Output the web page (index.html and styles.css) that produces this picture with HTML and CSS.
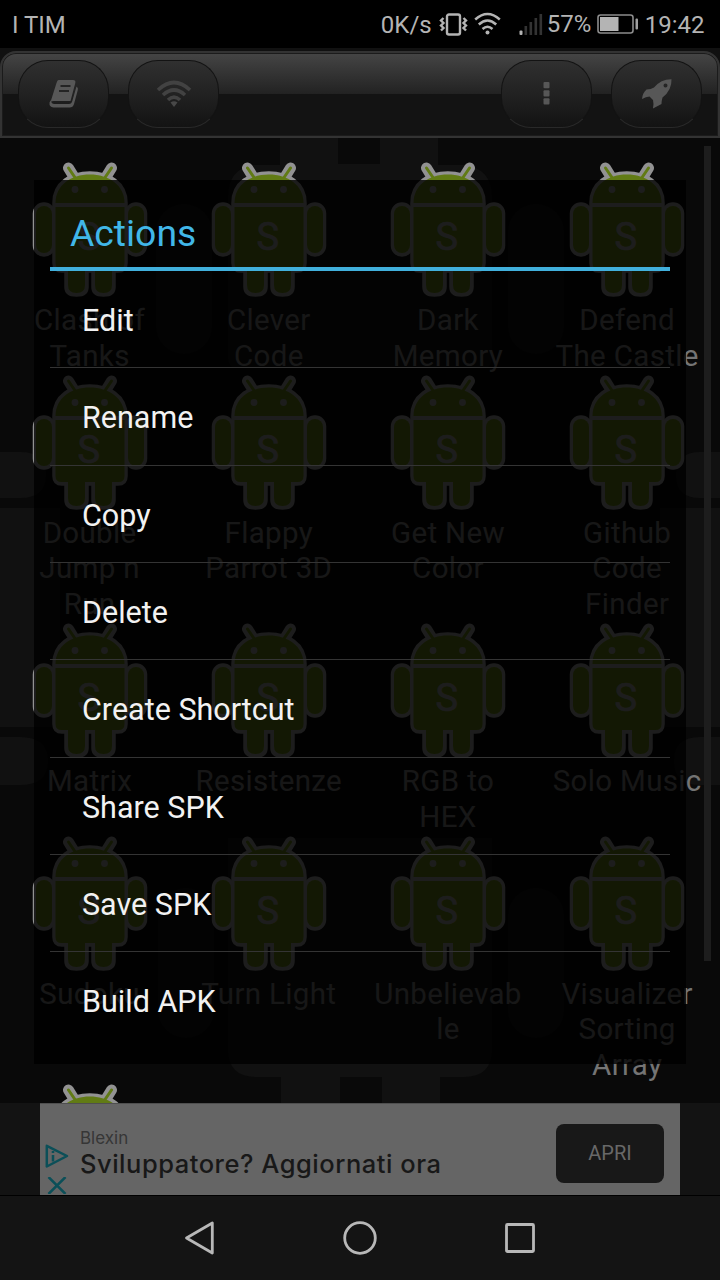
FILE: index.html
```
<!DOCTYPE html>
<html lang="it">
<head>
<meta charset="utf-8">
<title>Actions</title>
<link rel="stylesheet" href="styles.css">
</head>
<body>
<svg class="defs" width="0" height="0">
  <symbol id="droid" viewBox="0 0 116 136">
    <g class="droid-outline">
      <path d="M36.5 6 42 15M79.5 6 74 15" stroke-width="11"/>
      <g stroke-width="7.500">
        <path class="droid-base" d="M24 41C24 22 40 13 57.800 13S92 22 92 41V101Q92 107 86 107H80V125Q80 131 71.500 131T63 125V107H53V125Q53 131 44.500 131T36 125V107H30Q24 107 24 101Z"/>
        <rect x="4.500" y="44" width="15" height="47" rx="7.500"/>
        <rect x="96.500" y="44" width="15" height="47" rx="7.500"/>
      </g>
    </g>
    <g class="droid-fill">
      <path class="droid-antenna" d="M36.500 6 44 17M79.500 6 72 17"/>
      <path d="M23.500 41C23.500 23 39 12.500 57.800 12.500S92.500 23 92.500 41Z"/>
      <path d="M23.500 45H92.500V101Q92.500 107 86.500 107H80V123Q80 131 71.500 131T63 123V107H53V123Q53 131 44.500 131T36 123V107H29.500Q23.500 107 23.500 101Z"/>
      <rect x="4" y="44" width="16" height="47" rx="8"/>
      <rect x="96" y="44" width="16" height="47" rx="8"/>
    </g>
    <circle class="droid-mark" cx="43" cy="27.500" r="3.400"/>
    <circle class="droid-mark" cx="72.500" cy="27.500" r="3.400"/>
    <text class="droid-mark droid-letter" x="57" y="87.500" text-anchor="middle">S</text>
  </symbol>
</svg>

<div class="screen">
  <header class="status">
    <span class="carrier">I TIM</span>
    <div class="status-right">
      <span class="rate">0K/s</span>
      <svg class="vibrate" width="29" height="24" viewBox="0 0 29 24" fill="none" stroke="#b4b4b4">
        <rect x="8" y="2.500" width="13" height="20" rx="2" stroke-width="2.400"/>
        <path d="M4.500 6 2 8.500 4.500 11 2 13.500 4.500 16 2 18.500M24.500 6 27 8.500 24.500 11 27 13.500 24.500 16 27 18.500" stroke-width="2.400"/>
      </svg>
      <svg class="wifi" width="27" height="24" viewBox="0 0 27 24" fill="none" stroke="#b4b4b4" stroke-width="2.500">
        <path d="M1.200 7.500Q13.500-3.500 25.800 7.500M4.800 12.500Q13.500 4.500 22.200 12.500M8.500 17Q13.500 12.500 18.500 17"/>
        <circle cx="13.500" cy="20.500" r="2" fill="#b4b4b4" stroke="none"/>
      </svg>
      <svg class="signal" width="24" height="24" viewBox="0 0 24 24" fill="#333">
        <rect x=".5" y="18.500" width="3" height="4.500" rx="1" fill="#b4b4b4"/>
        <rect x="5.500" y="14" width="2.600" height="9"/><rect x="10.500" y="10" width="2.600" height="13"/>
        <rect x="15.500" y="6" width="2.600" height="17"/><rect x="20.500" y="2" width="2.600" height="21"/>
      </svg>
      <span class="percent">57%</span>
      <svg class="battery" width="42" height="22" viewBox="0 0 42 22">
        <rect x="1" y="1" width="35" height="18" rx="2.500" fill="none" stroke="#8c8c8c" stroke-width="1.600"/>
        <rect x="3" y="3" width="18.500" height="14" fill="#b4b4b4"/>
        <rect x="38.500" y="4.500" width="2.500" height="11" rx="1" fill="#a0a0a0"/>
      </svg>
      <span class="clock">19:42</span>
    </div>
  </header>

  <nav class="toolbar">
    <div class="toolbar-inner">
      <button class="tool">
        <svg width="30" height="30" viewBox="0 0 30 30">
          <path d="M9.500 1H24Q27 1 26.300 4L21.500 22H5Q2.500 22 1.500 23L7.500 4Q8.300 1 9.500 1Z" fill="#575757"/>
          <path d="M27.500 7.500Q29.500 8.500 28.800 11L25 25Q24 28.500 20.500 28.500H4.500Q0 28 .5 23.500L2 21Q2 25 5.500 25H20Q22.500 25 23.300 22Z" fill="#575757"/>
          <path d="M11.500 7H21.500M10 12H20" stroke="#242424" stroke-width="2"/>
        </svg>
      </button>
      <button class="tool">
        <svg width="36" height="28" viewBox="0 0 36 28" fill="none" stroke="#424242" stroke-width="3.600">
          <path d="M2 10Q18-5 34 10M7 15Q18 5 29 15M12 20Q18 14 24 20"/>
          <path d="M14.500 22.500Q18 20 21.500 22.500L18 27Z" fill="#484848" stroke="none"/>
        </svg>
      </button>
      <span class="spacer"></span>
      <button class="tool">
        <svg width="8" height="26" viewBox="0 0 8 26" fill="#575757"><rect x=".5" y="1" width="6" height="6.200" rx="1"/><rect x=".5" y="9.200" width="6" height="6.200" rx="1"/><rect x=".5" y="17.300" width="6" height="6.200" rx="1"/></svg>
      </button>
      <button class="tool">
        <svg width="32" height="32" viewBox="0 0 32 32">
          <path fill-rule="evenodd" d="M30.500 1.200Q31 12 21.500 19.500 20.500 23 20.500 26L12 30.500Q13 26 12 22L8.500 18.500Q5 18.500 1 21Q1.500 15 5.500 11.500 10 11.500 13 9.500 20 1 30.500 1.200ZM24.500 5.500A2 2 0 1 0 24.500 9.500 2 2 0 1 0 24.500 5.500Z" fill="#575757"/>
        </svg>
      </button>
    </div>
  </nav>

  <main class="apps">
    <svg class="wallpaper" width="720" height="965" viewBox="0 0 720 965" fill="#111">
      <path d="M280 0H438V27H464Q492 30 492 60V220Q492 230 482 230H238Q228 230 228 220V60Q228 30 254 27H280Z"/>
      <path d="M338 0H380V26H338Z" fill="#090909"/>
      <path d="M0 314H20Q46 314 46 337T20 360H0ZM0 370H60V589H0ZM0 599H20Q48 599 48 623T20 647H0ZM720 314H700Q676 314 676 337T700 360H720ZM720 370H660V589H720ZM720 599H700Q674 599 674 623T700 647H720Z"/>
      <path d="M228 700H492V911Q492 939 464 939H440V965H382V939H340V965H281V939H256Q228 939 228 911Z"/>
      <rect x="156" y="66" width="56" height="150" rx="28"/><rect x="508" y="66" width="56" height="150" rx="28"/>
      <rect x="158" y="750" width="56" height="150" rx="28"/><rect x="508" y="750" width="56" height="150" rx="28"/>
    </svg>
    <div class="grid">
      <div class="app"><svg class="icon"><use href="#droid"/></svg><p>Clash of<br>Tanks</p></div>
      <div class="app"><svg class="icon"><use href="#droid"/></svg><p>Clever<br>Code</p></div>
      <div class="app"><svg class="icon"><use href="#droid"/></svg><p>Dark<br>Memory</p></div>
      <div class="app"><svg class="icon"><use href="#droid"/></svg><p>Defend<br>The Castle</p></div>
      <div class="app"><svg class="icon"><use href="#droid"/></svg><p>Double<br>Jump n<br>Run</p></div>
      <div class="app"><svg class="icon"><use href="#droid"/></svg><p>Flappy<br>Parrot 3D</p></div>
      <div class="app"><svg class="icon"><use href="#droid"/></svg><p>Get New<br>Color</p></div>
      <div class="app"><svg class="icon"><use href="#droid"/></svg><p>Github<br>Code<br>Finder</p></div>
      <div class="app"><svg class="icon"><use href="#droid"/></svg><p>Matrix</p></div>
      <div class="app"><svg class="icon"><use href="#droid"/></svg><p>Resistenze</p></div>
      <div class="app"><svg class="icon"><use href="#droid"/></svg><p>RGB to<br>HEX</p></div>
      <div class="app"><svg class="icon"><use href="#droid"/></svg><p>Solo Music</p></div>
      <div class="app"><svg class="icon"><use href="#droid"/></svg><p>Sudoku</p></div>
      <div class="app"><svg class="icon"><use href="#droid"/></svg><p>Turn Light</p></div>
      <div class="app"><svg class="icon"><use href="#droid"/></svg><p>Unbelievab<br>le</p></div>
      <div class="app"><svg class="icon"><use href="#droid"/></svg><p>Visualizer<br>Sorting<br>Array</p></div>
      <div class="app"><svg class="icon"><use href="#droid"/></svg></div>
    </div>
    <div class="scrollbar"></div>
  </main>

  <aside class="ad-strip">
    <div class="ad">
      <div class="ad-marks">
        <svg width="24" height="24" viewBox="0 0 24 24" fill="none" stroke="#0b4f58" stroke-width="2.500" stroke-linejoin="round"><path d="M1.800 1.800 22 12 1.800 22.500Z"/><path d="M8 11V17.500M8 7V9"/></svg>
        <svg width="20" height="17" viewBox="0 0 20 17" fill="none" stroke="#0b4f58" stroke-width="2.500"><path d="M1.500 0 18.500 17M18.500 0 1.500 17"/></svg>
      </div>
      <div class="ad-copy">
        <span class="ad-brand">Blexin</span>
        <span class="ad-title">Sviluppatore? Aggiornati ora</span>
      </div>
      <button class="ad-button">APRI</button>
    </div>
  </aside>

  <footer class="navbar">
    <svg width="32" height="36" viewBox="0 0 32 36" fill="none" stroke="#b8b8b8" stroke-width="2.800" stroke-linejoin="round"><path d="M29.300 3V33L3.500 18Z"/></svg>
    <svg width="36" height="36" viewBox="0 0 36 36" fill="none" stroke="#b8b8b8" stroke-width="2.800"><circle cx="18" cy="18" r="15.300"/></svg>
    <svg width="32" height="36" viewBox="0 0 32 36" fill="none" stroke="#b8b8b8" stroke-width="2.800"><rect x="1.500" y="4.500" width="27" height="27" rx="1"/></svg>
  </footer>

  <section class="dialog">
    <h1 class="dialog-title">Actions</h1>
    <ul class="actions">
      <li>Edit</li>
      <li>Rename</li>
      <li>Copy</li>
      <li>Delete</li>
      <li>Create Shortcut</li>
      <li>Share SPK</li>
      <li>Save SPK</li>
      <li>Build APK</li>
    </ul>
  </section>
</div>
</body>
</html>
```
FILE: styles.css
```
* { box-sizing: border-box; }
body { margin: 0; background: #000; font-family: Roboto, "Liberation Sans", sans-serif; }
p, h1, ul { margin: 0; padding: 0; font-weight: 400; }
button { padding: 0; border: 0; font-family: inherit; }
svg { display: block; flex: none; }
.defs { position: absolute; }

.screen { position: relative; display: flex; flex-direction: column; width: 720px; height: 1280px; overflow: hidden; }

.status { display: flex; justify-content: space-between; align-items: center; flex: none; height: 48px; padding: 2px 15.5px 0 12px; background: #000; color: #b4b4b4; font-size: 24px; line-height: 28px; }
.status-right { display: flex; align-items: center; }
.vibrate { margin-left: 7px; margin-top: -2px; }
.wifi { margin: -3px 0 0 6.5px; }
.signal { margin: -2px 0 0 17.5px; }
.percent { margin: -3px 0 0 4px; }
.battery { margin-left: 5.5px; }
.clock { margin-left: 6px; }

.toolbar { flex: none; height: 90px; padding: 3px 0 0; background: #111; }
.toolbar-inner { display: flex; gap: 19px; height: 87px; padding: 7px 16px 0; border: 2px solid #333; border-radius: 16px 16px 0 0; box-shadow: inset 0 0 0 1px #1b1b1b; background: linear-gradient(#454545 0, #222 41px, #131313 41px, #131313 100%); }
.tool { display: flex; align-items: center; justify-content: center; width: 91px; height: 68px; border: 1px solid #131313; border-bottom-color: #292929; border-radius: 30px; background: linear-gradient(#303030, #131313); }
.spacer { flex: 1; }

.apps { position: relative; flex: none; height: 965px; overflow: hidden; background: #090909; }
.wallpaper { position: absolute; top: 0; left: 0; }
.grid { position: relative; display: grid; grid-template-columns: repeat(4, 179.2px); padding-top: 24.2px; color: #747474; font-size: 29.5px; line-height: 35.4px; letter-spacing: .35px; text-align: center; }
.app { padding-bottom: 1px; }
.icon { width: 116px; height: 136px; margin: 0 auto 5px; }
.app p { white-space: nowrap; }
.droid-outline { fill: none; stroke: #929292; stroke-linecap: round; stroke-linejoin: round; }
.droid-base { fill: #929292; }
.droid-fill { fill: #617b14; }
.droid-antenna { fill: none; stroke: #617b14; stroke-width: 3; stroke-linecap: round; }
.droid-mark { fill: #929292; }
.droid-letter { font-family: Roboto, sans-serif; font-size: 38px; font-weight: 400; stroke: #929292; stroke-width: .7px; }
.scrollbar { position: absolute; top: 8px; left: 704px; width: 7px; height: 815px; background: #1d1d1d; }

.ad-strip { flex: none; height: 92px; padding: 0 40px; background: #131313; }
.ad { display: flex; align-items: flex-start; height: 92px; border-top: 1px solid #4f4f4f; background: #656565; }
.ad-marks { display: flex; flex-direction: column; gap: 9px; width: 40px; padding: 40px 0 0 5px; }
.ad-marks svg:last-child { margin-left: 2px; }
.ad-copy { display: flex; flex-direction: column; flex: 1; padding-top: 24px; font-family: Inter, sans-serif; white-space: nowrap; }
.ad-brand { color: #363636; font-size: 17px; line-height: 21px; }
.ad-title { color: #181818; font-size: 25.5px; font-weight: 500; line-height: 29px; letter-spacing: .52px; }
.ad-button { width: 108px; height: 59px; margin: 20px 16px 0 0; padding-bottom: 2px; border-radius: 8px; background: #181818; color: #686868; font-size: 20px; font-weight: 400; }

.navbar { display: flex; align-items: center; justify-content: center; gap: 127px; flex: none; height: 85px; border-top: 1px solid #000; background: #141414; }

.dialog { position: absolute; top: 180px; left: 34px; width: 652px; height: 884px; padding: 0 16px; background: rgba(0, 0, 0, .8); }
.dialog-title { height: 91px; padding: 15px 20px 0; border-bottom: 4px solid #41b0dc; color: #41b7e8; font-size: 37.3px; line-height: 76px; }
.actions { list-style: none; color: #f2f2f2; font-size: 30.5px; }
.actions li { height: 97.35px; padding: 3px 32px 0; border-bottom: 1px solid #343434; line-height: 94px; }
.actions li:last-child { border-bottom: 0; }
```
